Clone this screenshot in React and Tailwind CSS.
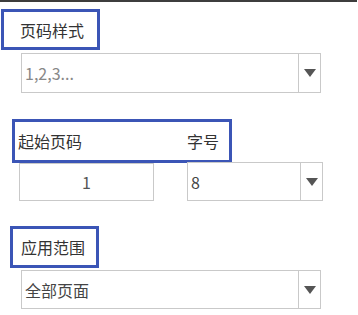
const font = { fontFamily: '"Noto Sans CJK SC", "Noto Sans", sans-serif' };

function Arrow() {
  return (
    <svg width="12" height="8" viewBox="0 0 12 8">
      <path d="M0 0 L12 0 L6 8 Z" fill="#555" />
    </svg>
  );
}

function Select({ value, className, textClass = "text-[#444]", divider }) {
  return (
    <div
      className={`flex items-stretch border border-[#c9c9c9] bg-white ${className}`}
    >
      <div className={`flex-1 flex items-center pl-[3px] text-[16px] ${textClass}`}>
        {value}
      </div>
      <div className={`flex items-center justify-center border-l border-[#c9c9c9] ${divider}`}>
        <Arrow />
      </div>
    </div>
  );
}

export default function App() {
  return (
    <div className="w-[358px] h-[315px] bg-white overflow-hidden" style={font}>
      <div className="h-[2px] w-[357px] bg-[#3d3d3d]" />

      <div className="ml-[1px] mt-[7px] w-[99px] h-[41px] border-[3px] border-[#3b55b6] flex items-center pl-[16px] text-[16px] text-[#333]">
        页码样式
      </div>
      <Select
        value="1,2,3..."
        textClass="text-[#888]"
        className="ml-[21px] mt-[3px] w-[300px] h-[40px]"
        divider="w-[22px]"
      />

      <div className="ml-[12px] mt-[26px] w-[220px] h-[44px] border-[3px] border-[#3b55b6] flex items-center text-[16px] text-[#333]">
        <span className="ml-[3px]">起始页码</span>
        <span className="ml-[105px]">字号</span>
      </div>
      <div className="flex items-start">
        <div className="ml-[19px] w-[135px] h-[38px] border border-[#c9c9c9] flex items-center justify-center text-[16px] text-[#555]">
          1
        </div>
        <Select
          value="8"
          className="ml-[33px] -mt-[1px] w-[136px] h-[39px]"
          divider="w-[22px]"
        />
      </div>

      <div className="ml-[10px] mt-[25px] w-[89px] h-[42px] border-[3px] border-[#3b55b6] flex items-center pl-[8px] text-[16px] text-[#333]">
        应用范围
      </div>
      <Select
        value="全部页面"
        className="ml-[21px] mt-[2px] w-[300px] h-[39px]"
        divider="w-[22px]"
      />
    </div>
  );
}
